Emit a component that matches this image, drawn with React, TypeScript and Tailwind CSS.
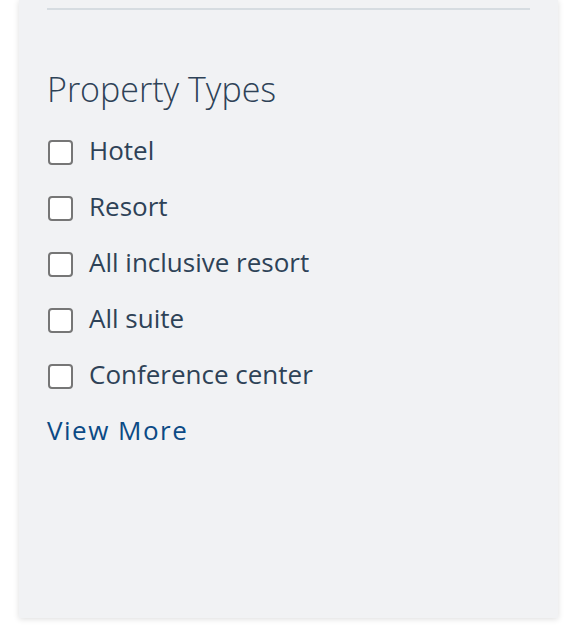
import React from "react";

const items = ["Hotel", "Resort", "All inclusive resort", "All suite", "Conference center"];

export default function App() {
  return (
    <div className="w-full h-[632px] bg-white pl-[19px] pr-[16px] pb-[14px]" style={{ fontFamily: '"Open Sans", sans-serif' }}>
      <div className="h-full bg-[#f1f2f4] shadow-[0_1px_6px_rgba(0,0,0,0.14)] px-[28px] pt-[8px] flex flex-col">
        <div className="h-[2px] bg-[#d6dce1]" />
        <h2 className="mt-[59px] text-[34px] leading-[40px] font-light text-[#2e4257]">Property Types</h2>
        <ul className="mt-[15px] flex flex-col">
          {items.map((t) => (
            <li key={t} className="h-[56px] flex items-center">
              <label className="flex items-center gap-[16px] pl-[1px] cursor-pointer">
                <span className="w-[25px] h-[25px] rounded-[4px] border-[2px] border-[#767676] bg-white shrink-0" />
                <span className="pb-[4px] text-[26px] leading-[30px] text-[#2e4257]">{t}</span>
              </label>
            </li>
          ))}
        </ul>
        <a className="mt-[10px] text-[26px] leading-[32px] tracking-[1.5px] text-[#0b4a85]">View More</a>
      </div>
    </div>
  );
}
